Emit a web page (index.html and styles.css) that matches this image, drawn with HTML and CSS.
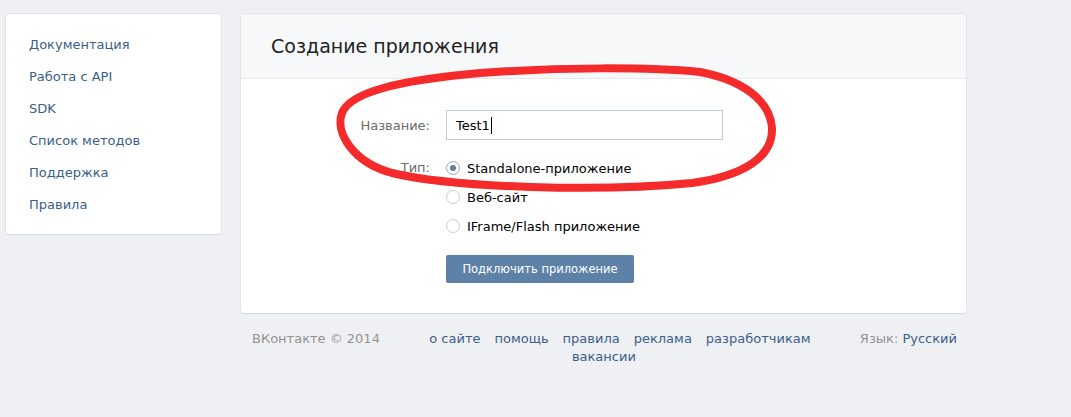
FILE: index.html
```html
<!DOCTYPE html>
<html lang="ru">
<head>
<meta charset="utf-8">
<title>Создание приложения</title>
<link rel="stylesheet" href="styles.css">
</head>
<body>
<div class="page">
  <nav class="side card">
    <a class="side-item" href="#">Документация</a>
    <a class="side-item" href="#">Работа с API</a>
    <a class="side-item" href="#">SDK</a>
    <a class="side-item" href="#">Список методов</a>
    <a class="side-item" href="#">Поддержка</a>
    <a class="side-item" href="#">Правила</a>
  </nav>
  <div class="main">
    <section class="card panel">
      <header class="panel-head">
        <h1 class="panel-title">Создание приложения</h1>
      </header>
      <form class="form">
        <div class="row row-input">
          <label class="label">Название:</label>
          <div class="field"><span class="input-text">Test1</span><span class="caret"></span></div>
        </div>
        <div class="row row-type">
          <span class="label">Тип:</span>
          <div class="radios">
            <div class="radio on"><span class="dot"></span><span>Standalone-приложение</span></div>
            <div class="radio"><span class="dot"></span><span>Веб-сайт</span></div>
            <div class="radio"><span class="dot"></span><span>IFrame/Flash приложение</span></div>
          </div>
        </div>
        <div class="row row-btn">
          <span class="label"></span>
          <button type="button" class="btn">Подключить приложение</button>
        </div>
      </form>
    </section>
    <footer class="foot">
      <div class="copy">ВКонтакте © 2014</div>
      <div class="links">
        <div class="links-line">
          <a href="#">о сайте</a><a href="#">помощь</a><a href="#">правила</a><a href="#">реклама</a><a href="#">разработчикам</a>
        </div>
        <div class="links-line second"><a href="#">вакансии</a></div>
      </div>
      <div class="lang">Язык: <a href="#">Русский</a></div>
    </footer>
  </div>
</div>
<svg class="scribble" width="1071" height="417" viewBox="0 0 1071 417">
  <path d="M 700 72 C 742 80, 770 100, 772 128 C 773 158, 742 176, 692 183 C 600 192, 455 188, 392 173 C 352 162, 335 132, 342 113 C 350 92, 400 80, 480 73 C 560 67, 650 67, 700 72 Z" fill="none" stroke="#f52a2a" stroke-width="8" stroke-linejoin="round"/>
</svg>
</body>
</html>
```
FILE: styles.css
```css
* { box-sizing: border-box; }
html, body { margin: 0; padding: 0; }
body {
  background: #eff0f4;
  font-family: "DejaVu Sans", "Noto Sans", sans-serif;
  font-size: 13px;
  color: #000;
}
a { color: #3a5f8a; text-decoration: none; }
.page {
  display: flex;
  align-items: flex-start;
  gap: 20px;
  padding: 14px 0 0 6px;
}
.card {
  background: #fff;
  border-radius: 2px;
  box-shadow: 0 1px 0 0 #d7d8db, 0 0 0 1px #e3e4e8;
}
.side {
  width: 215px;
  padding: 15px 0 13px;
  display: flex;
  flex-direction: column;
}
.side-item {
  height: 32px;
  line-height: 32px;
  padding-left: 23px;
  color: #3a5f8a;
}
.main { width: 725px; }
.panel-head {
  height: 65px;
  background: #f7f8fa;
  border-bottom: 1px solid #e7e8ec;
  padding-left: 30px;
  display: flex;
  align-items: center;
}
.panel-title {
  margin: 0;
  font-weight: normal;
  font-size: 19px;
  color: #222;
}
.form {
  padding: 31px 0 30px;
  display: flex;
  flex-direction: column;
}
.row {
  display: flex;
  gap: 16px;
}
.label {
  width: 189px;
  text-align: right;
  color: #6b6b6b;
  flex: none;
}
.row-input { align-items: center; }
.field {
  width: 277px;
  height: 30px;
  border: 1px solid #c0cad5;
  padding: 0 9px;
  display: flex;
  align-items: center;
  font-size: 13px;
}
.caret {
  display: inline-block;
  width: 1px;
  height: 17px;
  background: #000;
  margin-left: 1px;
}
.row-type { margin-top: 18px; }
.row-type .label { line-height: 20px; }
.radios { display: flex; flex-direction: column; gap: 9px; }
.radio {
  display: flex;
  align-items: center;
  gap: 7px;
  height: 20px;
  color: #000;
}
.dot {
  width: 14px;
  height: 14px;
  border-radius: 50%;
  border: 1px solid #c8ced6;
  background: #fff;
  position: relative;
  flex: none;
}
.radio.on .dot { border-color: #9aabbc; }
.radio.on .dot::after {
  content: "";
  position: absolute;
  left: 3px; top: 3px;
  width: 6px; height: 6px;
  border-radius: 50%;
  background: #5e81a8;
}
.row-btn { margin-top: 19px; }
.btn {
  width: 188px;
  height: 28px;
  background: #5e81a8;
  border: 0;
  border-radius: 2px;
  color: #fff;
  font-family: inherit;
  font-size: 11.5px;
  padding: 0;
}
.foot {
  display: flex;
  align-items: flex-start;
  padding: 17px 9px 0 11px;
  line-height: 18px;
}
.copy { color: #939393; white-space: nowrap; }
.links { flex: 1; text-align: center; }
.links-line { white-space: nowrap; }
.links-line a { margin: 0 7px; }
.links-line.second { padding-right: 32px; }
.lang { color: #939393; white-space: nowrap; }
.scribble {
  position: absolute;
  left: 0; top: 0;
  pointer-events: none;
}
```
